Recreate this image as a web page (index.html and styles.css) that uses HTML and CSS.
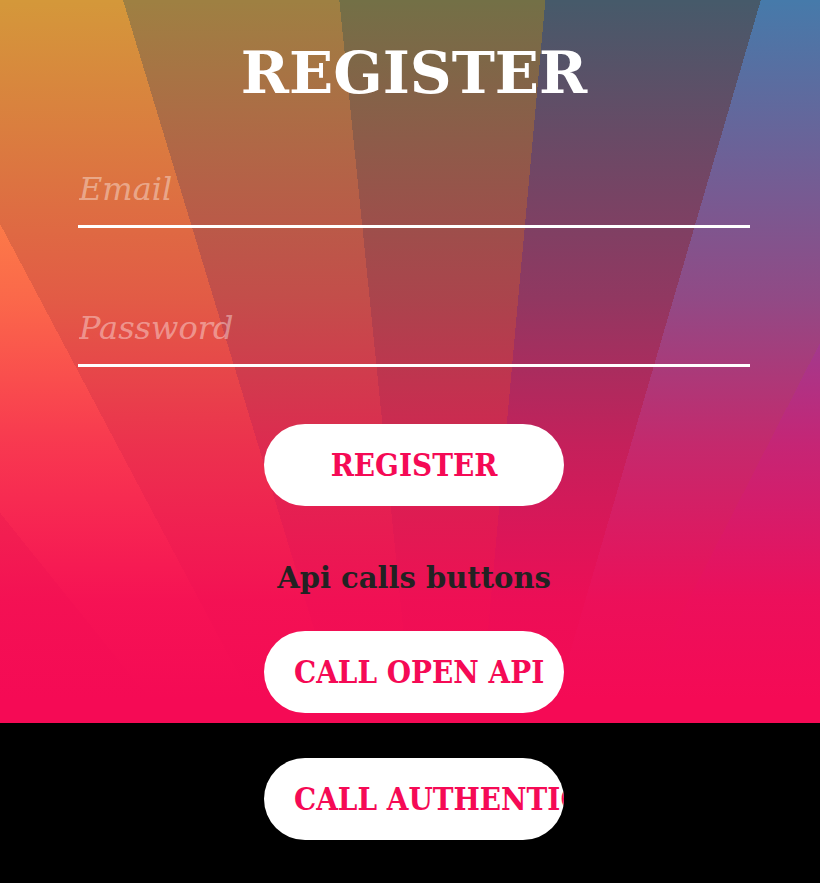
FILE: index.html
```html
<!DOCTYPE html>
<html lang="en">
<head>
<meta charset="utf-8">
<title>Register</title>
<link rel="stylesheet" href="styles.css">
</head>
<body>
<div class="page">
  <section class="hero">
    <h1 class="title">REGISTER</h1>
    <form class="form">
      <input class="field" type="email" placeholder="Email">
      <input class="field field-second" type="password" placeholder="Password">
      <button class="pill pill-register" type="button">REGISTER</button>
    </form>
    <h2 class="subtitle">Api calls buttons</h2>
    <button class="pill pill-open" type="button">CALL OPEN API</button>
  </section>
  <div class="below">
    <button class="pill" type="button">CALL AUTHENTICATED API</button>
  </div>
</div>
</body>
</html>
```
FILE: styles.css
```css
html, body {
  margin: 0;
  padding: 0;
  background: #000;
}

.page {
  width: 820px;
}

.hero {
  box-sizing: border-box;
  height: 723px;
  padding: 38px 0 0 8px;
  display: flex;
  flex-direction: column;
  align-items: center;
  background:
    linear-gradient(to bottom,
      rgba(245, 10, 85, 0) 0px,
      rgba(245, 10, 85, 0.43) 300px,
      rgba(245, 10, 85, 0.72) 445px,
      rgba(245, 10, 85, 0.95) 600px,
      #f50a55 700px),
    conic-gradient(from 0deg at 448px 1070px,
      #737046 0deg 5.2deg,
      #465a6a 5.2deg 16.3deg,
      #467aaa 16.3deg 27.1deg,
      #4a6cc8 27.1deg 180deg,
      #e0903a 180deg 321.2deg,
      #ffaf42 321.2deg 332.1deg,
      #d4983a 332.1deg 343.1deg,
      #9e8042 343.1deg 354.2deg,
      #737046 354.2deg 360deg);
}

.title {
  margin: 0;
  font-family: "DejaVu Serif", serif;
  font-weight: bold;
  font-size: 58px;
  line-height: 70px;
  color: #fff;
}

.form {
  width: 672px;
  margin: 61px 0 0;
  display: flex;
  flex-direction: column;
  align-items: center;
}

.field {
  box-sizing: border-box;
  width: 672px;
  height: 59px;
  margin: 0;
  padding: 0 0 16px 1px;
  border: none;
  border-bottom: 3px solid #fff;
  background: transparent;
  outline: none;
  font-family: "DejaVu Serif", serif;
  font-style: italic;
  font-size: 32px;
  color: #fff;
}

.field::placeholder {
  color: rgba(255, 255, 255, 0.4);
}

.field-second {
  margin-top: 80px;
}

.pill {
  box-sizing: border-box;
  width: 300px;
  height: 82px;
  padding: 0 30px;
  border: none;
  border-radius: 41px;
  background: #fff;
  overflow: hidden;
  white-space: nowrap;
  text-align: center;
  font-family: "DejaVu Serif Condensed", "DejaVu Serif", serif;
  font-stretch: condensed;
  font-weight: bold;
  font-size: 31px;
  color: #f50a55;
  cursor: pointer;
}

.pill-register {
  margin-top: 57px;
}

.subtitle {
  margin: 54px 0 0;
  font-family: "DejaVu Serif", serif;
  font-weight: bold;
  font-size: 29px;
  line-height: 36px;
  color: #222;
}

.pill-open {
  margin-top: 35px;
}

.below {
  display: flex;
  justify-content: center;
  padding: 35px 0 43px 8px;
}
```
